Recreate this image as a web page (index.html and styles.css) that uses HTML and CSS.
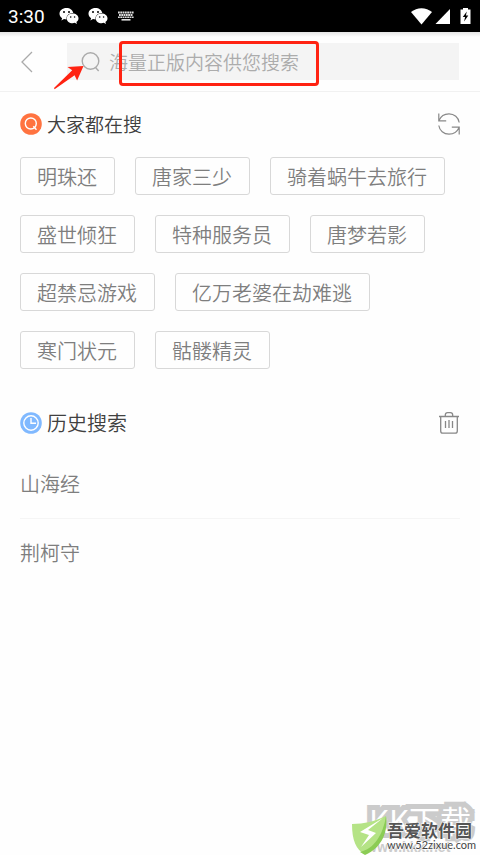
FILE: index.html
```html
<!DOCTYPE html>
<html lang="zh-CN">
<head>
<meta charset="utf-8">
<meta name="viewport" content="width=device-width, initial-scale=1">
<title>搜索</title>
<link rel="stylesheet" href="styles.css">
</head>
<body>
<div class="status">
  <span class="time">3:30</span>
  <svg class="chat" viewBox="0 0 20 18" aria-hidden="true"><path fill="#fff" d="M7.500 1C3.400 1 .5 3.600.5 6.800c0 1.800 1 3.400 2.600 4.400L2.400 13.400 5 12.100c.8.3 1.700.4 2.600.4C7 8.600 10 6 14.300 6 13.700 3 11 1 7.500 1Z"/><path fill="#fff" d="M13.600 6.600c-3.300 0-5.800 2.100-5.800 4.800s2.500 4.800 5.800 4.800c.8 0 1.500-.1 2.100-.4l2.300 1.200-.6-2c1.300-.9 2.100-2.200 2.100-3.600 0-2.700-2.600-4.800-5.900-4.800Z"/><g fill="#000"><circle cx="5" cy="5" r="1"/><circle cx="10" cy="5" r="1"/><circle cx="11.700" cy="10" r=".8"/><circle cx="15.600" cy="10" r=".8"/></g></svg>
  <svg class="chat" viewBox="0 0 20 18" aria-hidden="true"><path fill="#fff" d="M7.500 1C3.400 1 .5 3.600.5 6.800c0 1.800 1 3.400 2.600 4.400L2.400 13.400 5 12.100c.8.3 1.700.4 2.600.4C7 8.600 10 6 14.300 6 13.700 3 11 1 7.500 1Z"/><path fill="#fff" d="M13.600 6.600c-3.300 0-5.800 2.100-5.800 4.800s2.500 4.800 5.800 4.800c.8 0 1.500-.1 2.100-.4l2.300 1.200-.6-2c1.300-.9 2.100-2.200 2.100-3.600 0-2.700-2.600-4.800-5.900-4.800Z"/><g fill="#000"><circle cx="5" cy="5" r="1"/><circle cx="10" cy="5" r="1"/><circle cx="11.700" cy="10" r=".8"/><circle cx="15.600" cy="10" r=".8"/></g></svg>
  <svg class="keys" viewBox="0 0 18 10" aria-hidden="true"><g stroke="#ddd" fill="none"><path stroke-width="1.800" stroke-dasharray="1.800 .5" d="M1 1.500h16"/><path stroke-width="1.800" stroke-dasharray="1.800 .5" d="M2 4h14"/><path stroke-width="1.600" stroke-dasharray="1.800 .5" d="M1 6.300h16"/><path stroke-width="1.600" d="M4.500 8.800h9"/></g></svg>
  <svg class="system" viewBox="0 0 60 20" aria-hidden="true"><g fill="#fff"><path d="M0 6C6 .9 15 .9 21 6L10.500 18.500Z"/><path d="M39 3v15H24.500Z"/><path d="M52 2h5v1.500h2.500V18h-10V3.500H52Z"/></g><path d="M55.800 5.500 51.800 11h2.300l-1 4.500 4.200-6h-2.400Z"/></svg>
</div>
<header class="bar">
  <button class="back" aria-label="返回"><svg viewBox="0 0 12 22"><path d="M11 1 1 11l10 10" fill="none" stroke="#aaa" stroke-width="1.300"/></svg></button>
  <label class="search">
    <svg viewBox="0 0 20 22"><g fill="none" stroke="#aaa" stroke-width="1.400"><circle cx="9.500" cy="10" r="8.300"/><path d="m14.500 16.500 3.200 3.500"/></g></svg>
    <input type="text" placeholder="海量正版内容供您搜索" aria-label="搜索">
  </label>
  <svg class="arrow" viewBox="0 0 30 24" aria-hidden="true"><path fill="#ff2312" d="M29.500 0 13.500 1l4.700 3.300L0 22l.6 1.300L20.600 9.300l2.500 5.200Z"/></svg>
  <div class="frame"></div>
</header>
<main>
  <section class="hot">
    <div class="head">
      <svg class="badge" viewBox="0 0 22 22" aria-hidden="true"><circle cx="11" cy="11" r="10.800" fill="#ff7340"/><g fill="none" stroke="#fff" stroke-width="1.400"><circle cx="10.800" cy="10.500" r="5.500"/><path d="m13.300 13.300 3.200 3.400"/></g></svg>
      <h2>大家都在搜</h2>
      <button aria-label="刷新"><svg viewBox="0 0 22 22"><path fill="none" stroke="#888" stroke-width="1.200" d="M.8.5v7.300h7.400M1 7.600C2.600 3.500 6.500.8 11 .8c5.200 0 9.500 3.700 10.200 8.700M21.200 21.500v-7.300h-7.400M21 14.400c-1.600 4.100-5.500 6.800-10 6.800-5.200 0-9.500-3.700-10.200-8.700"/></svg></button>
    </div>
    <div class="tags">
      <button>明珠还</button><button>唐家三少</button><button>骑着蜗牛去旅行</button>
      <button>盛世倾狂</button><button>特种服务员</button><button>唐梦若影</button>
      <button>超禁忌游戏</button><button>亿万老婆在劫难逃</button>
      <button>寒门状元</button><button>骷髅精灵</button>
    </div>
  </section>
  <section class="history">
    <div class="head">
      <svg class="badge" viewBox="0 0 22 22" aria-hidden="true"><circle cx="11" cy="11" r="10.800" fill="#80b9ff"/><g fill="none" stroke="#fff" stroke-width="1.400"><circle cx="11" cy="11" r="7.200"/><path d="M11 6v5.200h5"/></g></svg>
      <h2>历史搜索</h2>
      <button aria-label="清空"><svg viewBox="0 0 22 22"><g fill="none" stroke="#888" stroke-width="1.300"><path d="M1 4.500h20M7.300 4.500V3q0-2.300 2.300-2.300h2.800q2.300 0 2.300 2.300v1.500M2.700 4.500V19q0 2.200 2.200 2.200h12.200q2.200 0 2.200-2.200V4.500"/><path d="M7.500 9v7M11 8v8M14.500 9v7"/></g></svg></button>
    </div>
    <ul>
      <li><a href="#">山海经</a></li>
      <li><a href="#">荆柯守</a></li>
    </ul>
  </section>
</main>
<div class="mark">
  <div class="under">KK下载</div>
  <div class="under-url">www.kkx.net</div>
  <svg viewBox="0 0 36 40" aria-hidden="true"><path fill="#b5e386" d="M0 9C12 9 24 6 34 1c1 14-3 30-21 38C4 35 0 25 0 9Z"/><path fill="#8bcc55" d="M34 1c2 15-3 31-21 39L8 37C22 34 31 20 34 1Z"/><path fill="#fff" d="M31 3 8 17l9 3-8 12 15-14-8-3Z"/></svg>
  <div class="name">吾爱软件园</div>
  <div class="url">www.52zixue.com</div>
</div>
</body>
</html>
```

FILE: styles.css
```css
* { box-sizing: border-box; }
body {
  margin: 0;
  min-height: 100vh;
  position: relative;
  background: #fefefe;
  color: #7e7e7e;
  font-family: "Noto Sans CJK SC", sans-serif;
  font-weight: 350;
}
button { padding: 0; border: 0; background: none; font: inherit; color: inherit; }
svg { display: block; flex: none; }

.status {
  display: flex;
  align-items: center;
  height: 32px;
  padding: 0 9px 0 8px;
  background: #000;
}
.time { color: #fff; font: 400 19px Roboto, sans-serif; margin-right: 14px; }
.chat { width: 20px; height: 18px; margin-right: 9px; }
.keys { width: 18px; height: 10px; }
.system { width: 60px; height: 20px; margin-left: auto; }

.bar {
  position: relative;
  display: flex;
  align-items: center;
  height: 60px;
  padding: 0 21px;
  border-bottom: 1px solid #f1f1f1;
  background: linear-gradient(#e4e4e4, #fefefe 5px);
}
.back { width: 46px; height: 37px; }
.back svg { width: 12px; height: 22px; }
.search {
  flex: 1;
  display: flex;
  align-items: center;
  height: 37px;
  padding-left: 14px;
  background: #f4f4f4;
}
.search svg { width: 20px; height: 22px; }
.search input {
  flex: 1;
  min-width: 0;
  margin-left: 8px;
  padding: 0;
  border: 0;
  outline: 0;
  background: none;
  font: inherit;
  font-size: 19px;
}
.search input::placeholder { color: #acacac; opacity: 1; }
.arrow { position: absolute; left: 54px; top: 34px; width: 30px; height: 24px; }
.frame {
  position: absolute;
  left: 119px;
  top: 9px;
  width: 200px;
  height: 45px;
  border: 3px solid #ff2312;
  border-radius: 4px;
}

main { padding: 0 20px; }
.head { display: flex; align-items: center; height: 30px; }
.head h2 { margin: 0 auto 0 5px; color: #404040; font-size: 19px; font-weight: inherit; line-height: 30px; }
.history h2 { font-size: 20px; line-height: 32px; }
.badge, .head button svg { width: 22px; height: 22px; }

.hot { padding-top: 17px; }
.tags { display: flex; flex-wrap: wrap; gap: 20px; padding-top: 18px; }
.tags button {
  height: 38px;
  padding: 0 17px 0 16px;
  border: 1px solid #d8d8d8;
  border-radius: 3px;
  font-size: 20px;
  line-height: 38px;
}

.history { padding-top: 39px; }
ul { margin: 0; padding: 12px 0 0; list-style: none; }
li { height: 68px; font-size: 20px; line-height: 68px; }
li + li { border-top: 1px solid #f5f5f5; }
a { color: inherit; text-decoration: none; }

.mark { position: absolute; right: 0; bottom: 0; width: 130px; height: 60px; white-space: nowrap; }
.mark > * { position: absolute; }
.mark svg { left: 2px; top: 20px; width: 36px; height: 40px; }
.under { left: 19px; top: 8px; color: #fff; font-size: 31px; font-weight: 400; line-height: 34px; -webkit-text-stroke: 10px #cbcbcb; paint-order: stroke fill; stroke-linejoin: round; }
.under-url { left: 16px; top: 44px; color: #ccc; font: bold 14px/16px "Liberation Sans", sans-serif; }
.name { left: 37px; top: 24px; color: #555; font-size: 17px; font-weight: 700; line-height: 22px; -webkit-text-stroke: 1px #fff; paint-order: stroke fill; }
.url { left: 37px; top: 43px; color: #444; font: 11px/14px Lato, sans-serif; -webkit-text-stroke: 1px #fff; paint-order: stroke fill; }
```
